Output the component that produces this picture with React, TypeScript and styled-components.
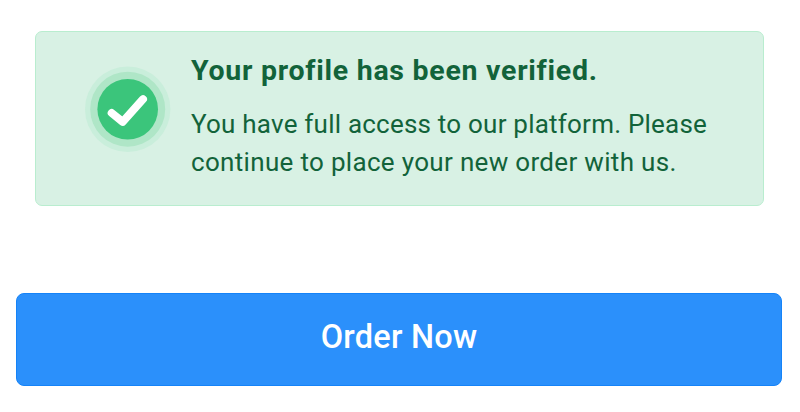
import React from 'react';
import styled, { createGlobalStyle } from 'styled-components';

const GlobalStyle = createGlobalStyle`
  * { box-sizing: border-box; }
  body { margin: 0; background: #fff; font-family: Roboto, sans-serif; }
`;

const Page = styled.main`
  height: 412px;
  padding: 31px 18px 0 16px;
  overflow: hidden;
`;

const Notice = styled.section`
  display: flex;
  width: 729px;
  height: 175px;
  margin-left: 19px;
  padding: 20px 0 0 48px;
  border: 1px solid #b9edcf;
  border-radius: 7px;
  background: #d8f1e4;
  color: #12633a;
`;

const StatusIcon = styled.svg`
  flex: none;
  width: 88px;
  height: 88px;
  margin: 14px 19px 0 0;
`;

const Message = styled.div`
  display: flex;
  flex-direction: column;
`;

const Title = styled.h1`
  margin: 0 0 16px;
  font-size: 28.5px;
  line-height: 37px;
  font-weight: 700;
  letter-spacing: 0.73px;
  font-variant-ligatures: none;
  white-space: nowrap;
`;

const Line = styled.span<{ $spacing: number }>`
  display: block;
  font-size: 26px;
  line-height: 38px;
  letter-spacing: ${p => p.$spacing}px;
  white-space: nowrap;
`;

const OrderButton = styled.button`
  display: flex;
  align-items: center;
  justify-content: center;
  width: 766px;
  height: 93px;
  margin: 87px 0 0;
  padding: 0 0 5px;
  border: 1px solid #1583f8;
  border-radius: 8px;
  background: #2b90fb;
  color: #fff;
  font: 500 32.5px Roboto, sans-serif;
  letter-spacing: 0.25px;
`;

export default function App() {
  return (
    <Page>
      <GlobalStyle />
      <Notice>
        <StatusIcon viewBox="0 0 88 88" aria-hidden="true">
          <circle cx="43.7" cy="43.2" r="42.7" fill="#c9eedb" />
          <circle cx="43.7" cy="43.2" r="37.5" fill="#afe6c7" />
          <circle cx="43.7" cy="43.2" r="30.3" fill="#3bc57b" />
          <path d="M27.7 47l11 8.9L59 33.2" fill="none" stroke="#fff" strokeWidth="8" strokeLinecap="round" strokeLinejoin="round" />
        </StatusIcon>
        <Message>
          <Title>Your profile has been verified.</Title>
          <Line $spacing={0.22}>You have full access to our platform. Please</Line>
          <Line $spacing={0.32}>continue to place your new order with us.</Line>
        </Message>
      </Notice>
      <OrderButton>Order Now</OrderButton>
    </Page>
  );
}
